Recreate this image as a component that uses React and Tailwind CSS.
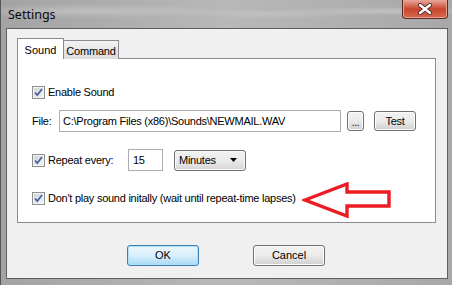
import React from "react";

function Check() {
  return (
    <div className="w-[13px] h-[13px] border border-[#8e8f8f] bg-gradient-to-br from-[#dcdcdc] to-[#f8f8f8] flex items-center justify-center shrink-0">
      <div className="w-[11px] h-[11px] border border-[#f4f4f4] bg-gradient-to-br from-[#cfd4da] to-[#f2f4f7] flex items-center justify-center">
        <svg width="9" height="9" viewBox="0 0 9 9">
          <path d="M1 4.5 L3.3 7 L8 1" fill="none" stroke="#4b62a0" strokeWidth="1.8" />
        </svg>
      </div>
    </div>
  );
}

function Btn({ children, className = "", focused = false }) {
  return (
    <div
      className={
        "flex items-center justify-center rounded-[3px] border " +
        (focused
          ? "border-[#3c7fb1] bg-gradient-to-b from-[#eaf6fd] via-[#d9f0fc] to-[#a7d9f5] shadow-[inset_0_0_0_1px_#b1e0f8] "
          : "border-[#707070] bg-gradient-to-b from-[#f2f2f2] via-[#ebebeb] to-[#cfcfcf] shadow-[inset_0_0_0_1px_#fcfcfc] ") +
        className
      }
    >
      {children}
    </div>
  );
}

export default function App() {
  return (
    <div
      className="w-[452px] h-[285px] flex flex-col overflow-hidden text-black bg-gradient-to-r from-[#a3a3a3] via-[#b8b8b8] to-[#a8a8a8] border-l border-[#555]"
      style={{ fontFamily: '"Liberation Sans", Arial, sans-serif', fontSize: "11px" }}
    >
      {/* title bar */}
      <div className="h-[28px] flex items-start relative">
        <div className="absolute inset-0 opacity-60 bg-[radial-gradient(ellipse_at_20%_40%,#cfcfcf_0%,transparent_30%),radial-gradient(ellipse_at_60%_50%,#c8c8c8_0%,transparent_25%),radial-gradient(ellipse_at_85%_40%,#d0d0d0_0%,transparent_20%)]" />
        <div className="relative pl-[7px] pt-[6px] text-[12.5px] text-[#0b0b0b]" style={{ fontFamily: '"Noto Sans", "Liberation Sans", sans-serif' }}>
          Settings
        </div>
        <div className="relative ml-auto mr-[4px] w-[46px] h-[19px] rounded-b-[4px] border border-t-0 border-[#5e2a20] bg-gradient-to-b from-[#e5a89c] via-[#c9442d] to-[#d46a4f] flex items-center justify-center shadow-[inset_0_0_0_1px_#eaa090]">
          <svg width="16" height="12" viewBox="0 0 16 12">
            <path d="M3 2 L13 10 M13 2 L3 10" stroke="#5a2a25" strokeWidth="4.2" strokeLinecap="round" />
            <path d="M3 2 L13 10 M13 2 L3 10" stroke="#ffffff" strokeWidth="2.4" strokeLinecap="round" />
          </svg>
        </div>
      </div>

      {/* client */}
      <div className="ml-[5px] mr-[4px] h-[251px] border border-[#5f5f5f] bg-[#f0f0f0] flex flex-col relative">
        <div className="pl-[10px] pt-[9px]">
          {/* tabs */}
          <div className="flex items-end h-[21px] relative z-10 text-[11px]">
            <div className="w-[47px] h-[21px] bg-white border border-b-0 border-[#898c95] flex items-start justify-center pt-[3px]">
              Sound
            </div>
            <div className="w-[55px] h-[19px] bg-gradient-to-b from-[#f2f2f2] to-[#dcdcdc] border border-l-0 border-b-0 border-[#898c95] flex items-start justify-center pt-[2px] tracking-[-0.2px]">
              Command
            </div>
          </div>
          {/* panel */}
          <div className="w-[419px] h-[165px] -mt-[1px] bg-white border border-[#898c95] flex flex-col pl-[14px] text-[11px] tracking-[-0.25px]">
            <div className="mt-[27px] h-[13px] flex items-center gap-[3px]">
              <Check />
              <span>Enable Sound</span>
            </div>
            <div className="mt-[11px] h-[22px] flex items-center">
              <span className="w-[27px]">File:</span>
              <div className="w-[282px] h-[22px] border border-[#abadb3] flex items-center pl-[3px] bg-white">
                C:\Program Files (x86)\Sounds\NEWMAIL.WAV
              </div>
              <Btn className="ml-[6px] w-[17px] h-[20px] text-[10px] leading-none pt-[4px]">...</Btn>
              <Btn className="ml-[10px] w-[42px] h-[20px]">Test</Btn>
            </div>
            <div className="mt-[17px] h-[22px] flex items-center">
              <Check />
              <span className="ml-[3px] w-[80px]">Repeat every:</span>
              <div className="w-[35px] h-[22px] border border-[#abadb3] flex items-center pl-[4px] bg-white">15</div>
              <div className="ml-[11px] w-[72px] h-[21px] rounded-[3px] border border-[#707070] bg-gradient-to-b from-[#f2f2f2] via-[#ebebeb] to-[#d6d6d6] flex items-center pl-[4px] shadow-[inset_0_0_0_1px_#fafafa]">
                <span>Minutes</span>
                <svg className="ml-auto mr-[8px]" width="7" height="4" viewBox="0 0 7 4">
                  <path d="M0 0 H7 L3.5 4 Z" fill="#000" />
                </svg>
              </div>
            </div>
            <div className="mt-[21px] h-[13px] flex items-center gap-[3px]">
              <Check />
              <span>Don't play sound initally (wait until repeat-time lapses)</span>
            </div>
          </div>
        </div>
        {/* buttons */}
        <div className="flex mt-[22px] pl-[120px] gap-[54px] text-[11px]">
          <Btn focused className="w-[72px] h-[21px]">OK</Btn>
          <Btn className="w-[72px] h-[21px]">Cancel</Btn>
        </div>
        {/* annotation arrow */}
        <svg className="absolute left-[295px] top-[153px]" width="92" height="38" viewBox="0 0 92 38">
          <path
            d="M3 18 L45 2 L45 10 L87 10 L87 24 L45 24 L45 34 Z"
            fill="#fff"
            stroke="#ed1c24"
            strokeWidth="3.4"
            strokeLinejoin="miter"
          />
        </svg>
      </div>
    </div>
  );
}
